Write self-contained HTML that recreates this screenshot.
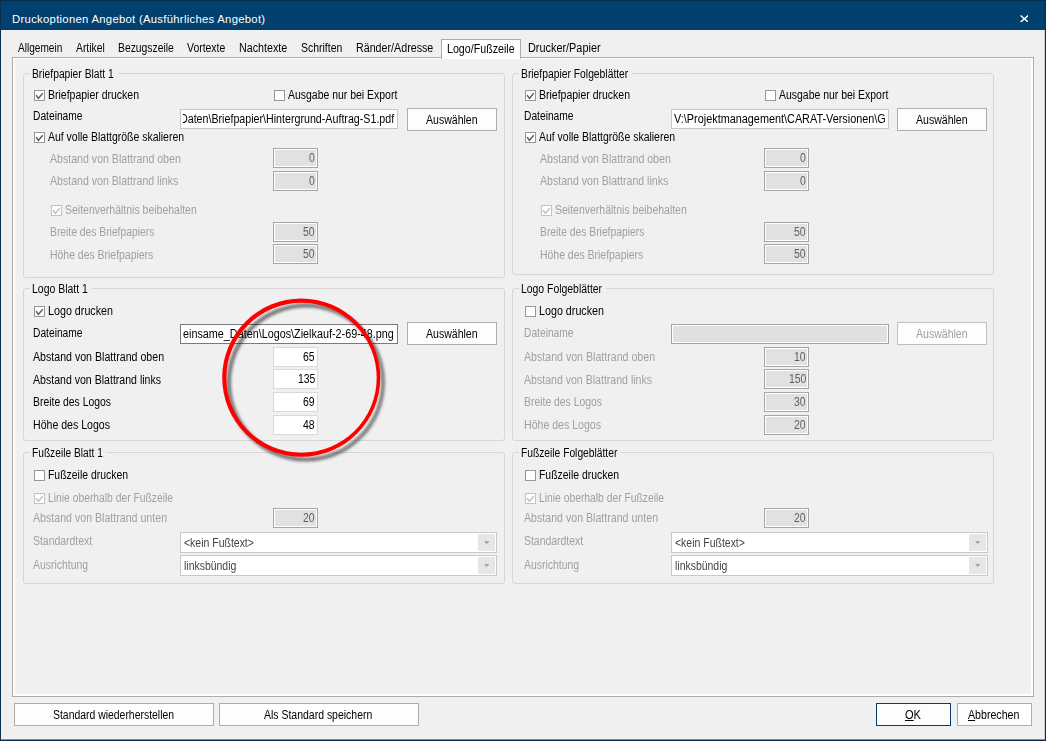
<!DOCTYPE html>
<html lang="de"><head><meta charset="utf-8"><title>Druckoptionen Angebot</title>
<style>
html,body{margin:0;padding:0}
body{width:1046px;height:741px;position:relative;overflow:hidden;background:#f0f0f0;font-family:"Liberation Sans", sans-serif;font-size:12px;line-height:14px}
#win div,#win svg,#win span.t{position:absolute}
#win div{box-sizing:content-box}
.t{white-space:pre}
.t.b{transform-origin:0 0}
.t u{text-decoration:underline;text-underline-offset:1px}
#title{left:0;top:0;width:1046px;height:30px;background:#01406f}
#bl{left:0;top:0;width:1px;height:741px;background:#0b2d4f}
#br{left:1045px;top:0;width:1px;height:741px;background:#0b2d4f;box-shadow:-1px 0 0 rgba(11,45,79,0.15)}
#bb{left:0;top:740px;width:1046px;height:1px;background:#0b2d4f;box-shadow:0 -1px 0 rgba(11,45,79,0.5)}
#bt{left:0;top:0;width:1046px;height:1px;background:#062b4c}
#page{left:12px;top:57px;width:1020px;height:638px;border:1px solid #acacac;box-shadow:inset 2px 0 0 #fff,inset -2px 0 0 #fff,inset 0 -2px 0 #fff,inset 0 1px 0 #fff}
#seltab{left:441px;top:39px;width:78px;height:19px;background:#fff;border:1px solid #acacac;border-bottom:none}
.gb{border:1px solid #d6d6d6;border-radius:3px}
.cb{width:9px;height:9px;border:1px solid #8a8a8a;background:#fff}
.cb svg{left:0;top:0}
.nb{width:43px;height:18px;border:1px solid #d9d9d9;background:#fff}
.nb.dis{border-color:#a5a5a5;background:#fff}
.nb.dis i{position:absolute;left:1px;top:1px;right:1px;bottom:1px;background:#e1e1e1}
</style></head>
<body><div id="win">
<div id="title"></div><div id="bt"></div>
<div id="page"></div><div id="seltab"></div>
<div class="gb" style="left:23px;top:73px;width:480px;height:203px"></div>
<div style="left:29.5px;top:73px;width:88.0px;height:1px;background:#f0f0f0"></div>
<div class="cb" style="left:34px;top:90px;border-color:#979797"><svg width="9" height="9" viewBox="0 0 9 9"><path d="M1.1 4.2 L3.4 7.4 L7.7 2.3" fill="none" stroke="#565656" stroke-width="1.4"/></svg></div>
<div class="cb" style="left:274px;top:90px;border-color:#979797"></div>
<div style="left:180px;top:109px;width:216px;height:18px;background:#fff;border:1px solid #c6c6c6"></div>
<div style="left:407px;top:108px;width:88px;height:21px;background:#fdfdfd;border:1px solid #adadad"></div>
<div class="cb" style="left:34px;top:132px;border-color:#979797"><svg width="9" height="9" viewBox="0 0 9 9"><path d="M1.1 4.2 L3.4 7.4 L7.7 2.3" fill="none" stroke="#565656" stroke-width="1.4"/></svg></div>
<div class="nb dis" style="left:273px;top:148px"><i></i></div>
<div class="nb dis" style="left:273px;top:171px"><i></i></div>
<div class="cb" style="left:51px;top:205px;border-color:#c2c2c2"><svg width="9" height="9" viewBox="0 0 9 9"><path d="M1.1 4.2 L3.4 7.4 L7.7 2.3" fill="none" stroke="#bdbdbd" stroke-width="1.4"/></svg></div>
<div class="nb dis" style="left:273px;top:222px"><i></i></div>
<div class="nb dis" style="left:273px;top:244px"><i></i></div>
<div class="gb" style="left:23px;top:288px;width:480px;height:151px"></div>
<div style="left:29.5px;top:288px;width:62.0px;height:1px;background:#f0f0f0"></div>
<div class="cb" style="left:34px;top:306px;border-color:#979797"><svg width="9" height="9" viewBox="0 0 9 9"><path d="M1.1 4.2 L3.4 7.4 L7.7 2.3" fill="none" stroke="#565656" stroke-width="1.4"/></svg></div>
<div style="left:180px;top:324px;width:216px;height:18px;background:#fff;border:1px solid #7a7a7a"></div>
<div style="left:407px;top:322px;width:88px;height:21px;background:#fdfdfd;border:1px solid #adadad"></div>
<div class="nb" style="left:273px;top:347px"></div>
<div class="nb" style="left:273px;top:369px"></div>
<div class="nb" style="left:273px;top:392px"></div>
<div class="nb" style="left:273px;top:415px"></div>
<div class="gb" style="left:23px;top:452px;width:480px;height:130px"></div>
<div style="left:29.5px;top:452px;width:77.0px;height:1px;background:#f0f0f0"></div>
<div class="cb" style="left:34px;top:470px;border-color:#979797"></div>
<div class="cb" style="left:34px;top:493px;border-color:#c2c2c2"><svg width="9" height="9" viewBox="0 0 9 9"><path d="M1.1 4.2 L3.4 7.4 L7.7 2.3" fill="none" stroke="#bdbdbd" stroke-width="1.4"/></svg></div>
<div class="nb dis" style="left:273px;top:508px"><i></i></div>
<div style="left:180px;top:532px;width:315px;height:19px;background:#fff;border:1px solid #c8c8c8"></div>
<div style="left:478px;top:534px;width:17px;height:17px;background:#e6e6e6"></div>
<svg style="left:483.8px;top:541px" width="5.4" height="3.2" viewBox="0 0 5.4 3.2"><path d="M0 0 L5.4 0 L2.7 3.2 Z" fill="#a6a6a6"/></svg>
<div style="left:180px;top:555px;width:315px;height:19px;background:#fff;border:1px solid #c8c8c8"></div>
<div style="left:478px;top:557px;width:17px;height:17px;background:#e6e6e6"></div>
<svg style="left:483.8px;top:564px" width="5.4" height="3.2" viewBox="0 0 5.4 3.2"><path d="M0 0 L5.4 0 L2.7 3.2 Z" fill="#a6a6a6"/></svg>
<div class="gb" style="left:512px;top:73px;width:480px;height:200px"></div>
<div style="left:518.5px;top:73px;width:113.5px;height:1px;background:#f0f0f0"></div>
<div class="cb" style="left:525px;top:90px;border-color:#979797"><svg width="9" height="9" viewBox="0 0 9 9"><path d="M1.1 4.2 L3.4 7.4 L7.7 2.3" fill="none" stroke="#565656" stroke-width="1.4"/></svg></div>
<div class="cb" style="left:765px;top:90px;border-color:#979797"></div>
<div style="left:671px;top:109px;width:216px;height:18px;background:#fff;border:1px solid #c6c6c6"></div>
<div style="left:897px;top:108px;width:88px;height:21px;background:#fdfdfd;border:1px solid #adadad"></div>
<div class="cb" style="left:525px;top:132px;border-color:#979797"><svg width="9" height="9" viewBox="0 0 9 9"><path d="M1.1 4.2 L3.4 7.4 L7.7 2.3" fill="none" stroke="#565656" stroke-width="1.4"/></svg></div>
<div class="nb dis" style="left:764px;top:148px"><i></i></div>
<div class="nb dis" style="left:764px;top:171px"><i></i></div>
<div class="cb" style="left:541px;top:205px;border-color:#c2c2c2"><svg width="9" height="9" viewBox="0 0 9 9"><path d="M1.1 4.2 L3.4 7.4 L7.7 2.3" fill="none" stroke="#bdbdbd" stroke-width="1.4"/></svg></div>
<div class="nb dis" style="left:764px;top:222px"><i></i></div>
<div class="nb dis" style="left:764px;top:244px"><i></i></div>
<div class="gb" style="left:512px;top:288px;width:480px;height:151px"></div>
<div style="left:518.5px;top:288px;width:87.25px;height:1px;background:#f0f0f0"></div>
<div class="cb" style="left:525px;top:306px;border-color:#979797"></div>
<div style="left:671px;top:324px;width:216px;height:18px;background:#e0e0e0;border:1px solid #a5a5a5;box-shadow:inset 0 0 0 1px #fff"></div>
<div style="left:897px;top:322px;width:88px;height:21px;background:#fdfdfd;border:1px solid #bfbfbf"></div>
<div class="nb dis" style="left:764px;top:347px"><i></i></div>
<div class="nb dis" style="left:764px;top:369px"><i></i></div>
<div class="nb dis" style="left:764px;top:392px"><i></i></div>
<div class="nb dis" style="left:764px;top:415px"><i></i></div>
<div class="gb" style="left:512px;top:452px;width:480px;height:130px"></div>
<div style="left:518.5px;top:452px;width:102.5px;height:1px;background:#f0f0f0"></div>
<div class="cb" style="left:525px;top:470px;border-color:#979797"></div>
<div class="cb" style="left:525px;top:493px;border-color:#c2c2c2"><svg width="9" height="9" viewBox="0 0 9 9"><path d="M1.1 4.2 L3.4 7.4 L7.7 2.3" fill="none" stroke="#bdbdbd" stroke-width="1.4"/></svg></div>
<div class="nb dis" style="left:764px;top:508px"><i></i></div>
<div style="left:671px;top:532px;width:315px;height:19px;background:#fff;border:1px solid #c8c8c8"></div>
<div style="left:969px;top:534px;width:17px;height:17px;background:#e6e6e6"></div>
<svg style="left:974.8px;top:541px" width="5.4" height="3.2" viewBox="0 0 5.4 3.2"><path d="M0 0 L5.4 0 L2.7 3.2 Z" fill="#a6a6a6"/></svg>
<div style="left:671px;top:555px;width:315px;height:19px;background:#fff;border:1px solid #c8c8c8"></div>
<div style="left:969px;top:557px;width:17px;height:17px;background:#e6e6e6"></div>
<svg style="left:974.8px;top:564px" width="5.4" height="3.2" viewBox="0 0 5.4 3.2"><path d="M0 0 L5.4 0 L2.7 3.2 Z" fill="#a6a6a6"/></svg>
<div style="left:14px;top:703px;width:198px;height:21px;background:#fdfdfd;border:1px solid #adadad"></div>
<div style="left:219px;top:703px;width:198px;height:21px;background:#fdfdfd;border:1px solid #adadad"></div>
<div style="left:876px;top:703px;width:73px;height:21px;background:#fdfdfd;border:1px solid #0c3a66"></div>
<div style="left:957px;top:703px;width:73px;height:21px;background:#fdfdfd;border:1px solid #adadad"></div>
<span class="t" style="left:12.10px;top:12px;color:#fff;font-size:11.3px;letter-spacing:0.284px">Druckoptionen Angebot (Ausführliches Angebot)</span>
<span class="t b" style="left:17.50px;top:41px;color:#000;transform:scaleX(0.8405)">Allgemein</span>
<span class="t b" style="left:75.50px;top:41px;color:#000;transform:scaleX(0.8638)">Artikel</span>
<span class="t b" style="left:117.50px;top:41px;color:#000;transform:scaleX(0.8622)">Bezugszeile</span>
<span class="t b" style="left:186.50px;top:41px;color:#000;transform:scaleX(0.8699)">Vortexte</span>
<span class="t b" style="left:238.50px;top:41px;color:#000;transform:scaleX(0.8939)">Nachtexte</span>
<span class="t b" style="left:300.50px;top:41px;color:#000;transform:scaleX(0.8719)">Schriften</span>
<span class="t b" style="left:355.50px;top:41px;color:#000;transform:scaleX(0.8913)">Ränder/Adresse</span>
<span class="t b" style="left:446.50px;top:42px;color:#000;transform:scaleX(0.8888)">Logo/Fußzeile</span>
<span class="t b" style="left:527.75px;top:41px;color:#000;transform:scaleX(0.9066)">Drucker/Papier</span>
<span class="t b" style="left:32.00px;top:67px;color:#000;transform:scaleX(0.8576)">Briefpapier Blatt 1</span>
<span class="t b" style="left:47.75px;top:88px;color:#000;transform:scaleX(0.8750)">Briefpapier drucken</span>
<span class="t b" style="left:287.50px;top:88px;color:#000;transform:scaleX(0.8715)">Ausgabe nur bei Export</span>
<span class="t b" style="left:32.75px;top:109px;color:#000;transform:scaleX(0.8537)">Dateiname</span>
<span class="t b" style="left:425.80px;top:113px;color:#000;transform:scaleX(0.8787)">Auswählen</span>
<span class="t b" style="left:47.75px;top:130px;color:#000;transform:scaleX(0.8716)">Auf volle Blattgröße skalieren</span>
<span class="t b" style="left:49.50px;top:152px;color:#a0a0a0;transform:scaleX(0.8831)">Abstand von Blattrand oben</span>
<span class="t b" style="left:309.19px;top:151px;color:#5f5f5f;transform:scaleX(0.87)">0</span>
<span class="t b" style="left:49.50px;top:174px;color:#a0a0a0;transform:scaleX(0.8822)">Abstand von Blattrand links</span>
<span class="t b" style="left:309.19px;top:174px;color:#5f5f5f;transform:scaleX(0.87)">0</span>
<span class="t b" style="left:65.00px;top:203px;color:#a0a0a0;transform:scaleX(0.8741)">Seitenverhältnis beibehalten</span>
<span class="t b" style="left:49.50px;top:225px;color:#a0a0a0;transform:scaleX(0.8592)">Breite des Briefpapiers</span>
<span class="t b" style="left:303.37px;top:225px;color:#5f5f5f;transform:scaleX(0.87)">50</span>
<span class="t b" style="left:49.50px;top:248px;color:#a0a0a0;transform:scaleX(0.8700)">Höhe des Briefpapiers</span>
<span class="t b" style="left:303.37px;top:247px;color:#5f5f5f;transform:scaleX(0.87)">50</span>
<span class="t b" style="left:32.00px;top:282px;color:#000;transform:scaleX(0.8711)">Logo Blatt 1</span>
<span class="t b" style="left:47.75px;top:304px;color:#000;transform:scaleX(0.8944)">Logo drucken</span>
<span class="t b" style="left:32.75px;top:326px;color:#000;transform:scaleX(0.8537)">Dateiname</span>
<span class="t b" style="left:425.80px;top:327px;color:#000;transform:scaleX(0.8787)">Auswählen</span>
<span class="t b" style="left:32.75px;top:349.5px;color:#000;transform:scaleX(0.8848)">Abstand von Blattrand oben</span>
<span class="t b" style="left:303.37px;top:350px;color:#000;transform:scaleX(0.87)">65</span>
<span class="t b" style="left:32.75px;top:373px;color:#000;transform:scaleX(0.8805)">Abstand von Blattrand links</span>
<span class="t b" style="left:297.58px;top:372px;color:#000;transform:scaleX(0.87)">135</span>
<span class="t b" style="left:32.75px;top:395px;color:#000;transform:scaleX(0.8666)">Breite des Logos</span>
<span class="t b" style="left:303.37px;top:395px;color:#000;transform:scaleX(0.87)">69</span>
<span class="t b" style="left:32.75px;top:417.5px;color:#000;transform:scaleX(0.8815)">Höhe des Logos</span>
<span class="t b" style="left:303.37px;top:418px;color:#000;transform:scaleX(0.87)">48</span>
<span class="t b" style="left:32.00px;top:446px;color:#000;transform:scaleX(0.8492)">Fußzeile Blatt 1</span>
<span class="t b" style="left:47.75px;top:468px;color:#000;transform:scaleX(0.8697)">Fußzeile drucken</span>
<span class="t b" style="left:47.75px;top:491px;color:#a0a0a0;transform:scaleX(0.8599)">Linie oberhalb der Fußzeile</span>
<span class="t b" style="left:32.75px;top:510.5px;color:#a0a0a0;transform:scaleX(0.8851)">Abstand von Blattrand unten</span>
<span class="t b" style="left:303.37px;top:511px;color:#5f5f5f;transform:scaleX(0.87)">20</span>
<span class="t b" style="left:32.75px;top:533.5px;color:#a0a0a0;transform:scaleX(0.8678)">Standardtext</span>
<span class="t b" style="left:183.70px;top:535.5px;color:#444;transform:scaleX(0.8733)">&lt;kein Fußtext&gt;</span>
<span class="t b" style="left:32.75px;top:558px;color:#a0a0a0;transform:scaleX(0.8686)">Ausrichtung</span>
<span class="t b" style="left:183.70px;top:559px;color:#444;transform:scaleX(0.8709)">linksbündig</span>
<span class="t b" style="left:521.00px;top:67px;color:#000;transform:scaleX(0.8602)">Briefpapier Folgeblätter</span>
<span class="t b" style="left:538.75px;top:88px;color:#000;transform:scaleX(0.8750)">Briefpapier drucken</span>
<span class="t b" style="left:778.50px;top:88px;color:#000;transform:scaleX(0.8715)">Ausgabe nur bei Export</span>
<span class="t b" style="left:523.75px;top:109px;color:#000;transform:scaleX(0.8537)">Dateiname</span>
<span class="t b" style="left:915.80px;top:113px;color:#000;transform:scaleX(0.8787)">Auswählen</span>
<span class="t b" style="left:538.75px;top:130px;color:#000;transform:scaleX(0.8716)">Auf volle Blattgröße skalieren</span>
<span class="t b" style="left:539.50px;top:152px;color:#a0a0a0;transform:scaleX(0.8831)">Abstand von Blattrand oben</span>
<span class="t b" style="left:800.19px;top:151px;color:#5f5f5f;transform:scaleX(0.87)">0</span>
<span class="t b" style="left:539.50px;top:174px;color:#a0a0a0;transform:scaleX(0.8822)">Abstand von Blattrand links</span>
<span class="t b" style="left:800.19px;top:174px;color:#5f5f5f;transform:scaleX(0.87)">0</span>
<span class="t b" style="left:555.00px;top:203px;color:#a0a0a0;transform:scaleX(0.8741)">Seitenverhältnis beibehalten</span>
<span class="t b" style="left:539.50px;top:225px;color:#a0a0a0;transform:scaleX(0.8592)">Breite des Briefpapiers</span>
<span class="t b" style="left:794.37px;top:225px;color:#5f5f5f;transform:scaleX(0.87)">50</span>
<span class="t b" style="left:539.50px;top:248px;color:#a0a0a0;transform:scaleX(0.8700)">Höhe des Briefpapiers</span>
<span class="t b" style="left:794.37px;top:247px;color:#5f5f5f;transform:scaleX(0.87)">50</span>
<span class="t b" style="left:521.00px;top:282px;color:#000;transform:scaleX(0.8677)">Logo Folgeblätter</span>
<span class="t b" style="left:538.75px;top:304px;color:#000;transform:scaleX(0.8944)">Logo drucken</span>
<span class="t b" style="left:523.75px;top:326px;color:#a0a0a0;transform:scaleX(0.8537)">Dateiname</span>
<span class="t b" style="left:915.80px;top:327px;color:#a0a0a0;transform:scaleX(0.8787)">Auswählen</span>
<span class="t b" style="left:523.75px;top:349.5px;color:#a0a0a0;transform:scaleX(0.8848)">Abstand von Blattrand oben</span>
<span class="t b" style="left:794.37px;top:350px;color:#5f5f5f;transform:scaleX(0.87)">10</span>
<span class="t b" style="left:523.75px;top:373px;color:#a0a0a0;transform:scaleX(0.8805)">Abstand von Blattrand links</span>
<span class="t b" style="left:788.58px;top:372px;color:#5f5f5f;transform:scaleX(0.87)">150</span>
<span class="t b" style="left:523.75px;top:395px;color:#a0a0a0;transform:scaleX(0.8666)">Breite des Logos</span>
<span class="t b" style="left:794.37px;top:395px;color:#5f5f5f;transform:scaleX(0.87)">30</span>
<span class="t b" style="left:523.75px;top:417.5px;color:#a0a0a0;transform:scaleX(0.8815)">Höhe des Logos</span>
<span class="t b" style="left:794.37px;top:418px;color:#5f5f5f;transform:scaleX(0.87)">20</span>
<span class="t b" style="left:521.00px;top:446px;color:#000;transform:scaleX(0.8543)">Fußzeile Folgeblätter</span>
<span class="t b" style="left:538.75px;top:468px;color:#000;transform:scaleX(0.8697)">Fußzeile drucken</span>
<span class="t b" style="left:538.75px;top:491px;color:#a0a0a0;transform:scaleX(0.8599)">Linie oberhalb der Fußzeile</span>
<span class="t b" style="left:523.75px;top:510.5px;color:#a0a0a0;transform:scaleX(0.8851)">Abstand von Blattrand unten</span>
<span class="t b" style="left:794.37px;top:511px;color:#5f5f5f;transform:scaleX(0.87)">20</span>
<span class="t b" style="left:523.75px;top:533.5px;color:#a0a0a0;transform:scaleX(0.8678)">Standardtext</span>
<span class="t b" style="left:674.70px;top:535.5px;color:#444;transform:scaleX(0.8733)">&lt;kein Fußtext&gt;</span>
<span class="t b" style="left:523.75px;top:558px;color:#a0a0a0;transform:scaleX(0.8686)">Ausrichtung</span>
<span class="t b" style="left:674.70px;top:559px;color:#444;transform:scaleX(0.8709)">linksbündig</span>
<div style="left:182.6px;top:111.5px;width:216px;height:14px;overflow:hidden"><span class="t b" style="left:-2.80px;top:0;color:#000;transform:scaleX(0.8895)">Daten\Briefpapier\Hintergrund-Auftrag-S1.pdf</span></div>
<span class="t b" style="left:183.10px;top:327px;color:#000;transform:scaleX(0.9003)">einsame_Daten\Logos\Zielkauf-2-69-48.png</span>
<span class="t b" style="left:674.00px;top:111.5px;color:#000;transform:scaleX(0.9047)">V:\Projektmanagement\CARAT-Versionen\G</span>
<span class="t b" style="left:52.50px;top:708px;color:#000;transform:scaleX(0.8682)">Standard wiederherstellen</span>
<span class="t b" style="left:263.50px;top:708px;color:#000;transform:scaleX(0.8729)">Als Standard speichern</span>
<span class="t b" style="left:905.20px;top:708px;color:#000;transform:scaleX(0.9221)"><u>O</u>K</span>
<span class="t b" style="left:967.70px;top:708px;color:#000;transform:scaleX(0.8853)"><u>A</u>bbrechen</span>
<svg style="left:1019.6px;top:14.6px" width="8.8" height="7.6" viewBox="0 0 8.8 7.6"><path d="M0.6 0.5 L8.2 7.1 M8.2 0.5 L0.6 7.1" stroke="#fff" stroke-width="1.45" fill="none"/></svg>
<svg style="left:205px;top:285px" width="200" height="190" viewBox="205 285 200 190">
<defs><filter id="sh" x="-20%" y="-20%" width="140%" height="140%"><feGaussianBlur stdDeviation="1.7"/></filter></defs>
<path d="M222.20 377.65 A79.05 79.05 0 1 0 380.30 377.65 A79.05 79.05 0 1 0 222.20 377.65 Z M226.40 377.75 A75.15 75.00 0 1 0 376.70 377.75 A75.15 75.00 0 1 0 226.40 377.75 Z" fill="#000" fill-opacity="0.52" fill-rule="evenodd" transform="translate(4.5 4.8)" filter="url(#sh)"/>
<path d="M222.20 377.65 A79.05 79.05 0 1 0 380.30 377.65 A79.05 79.05 0 1 0 222.20 377.65 Z M226.40 377.75 A75.15 75.00 0 1 0 376.70 377.75 A75.15 75.00 0 1 0 226.40 377.75 Z" fill="#ff0000" fill-rule="evenodd"/>
</svg>
<div id="bl"></div><div id="br"></div><div id="bb"></div>
</div></body></html>
